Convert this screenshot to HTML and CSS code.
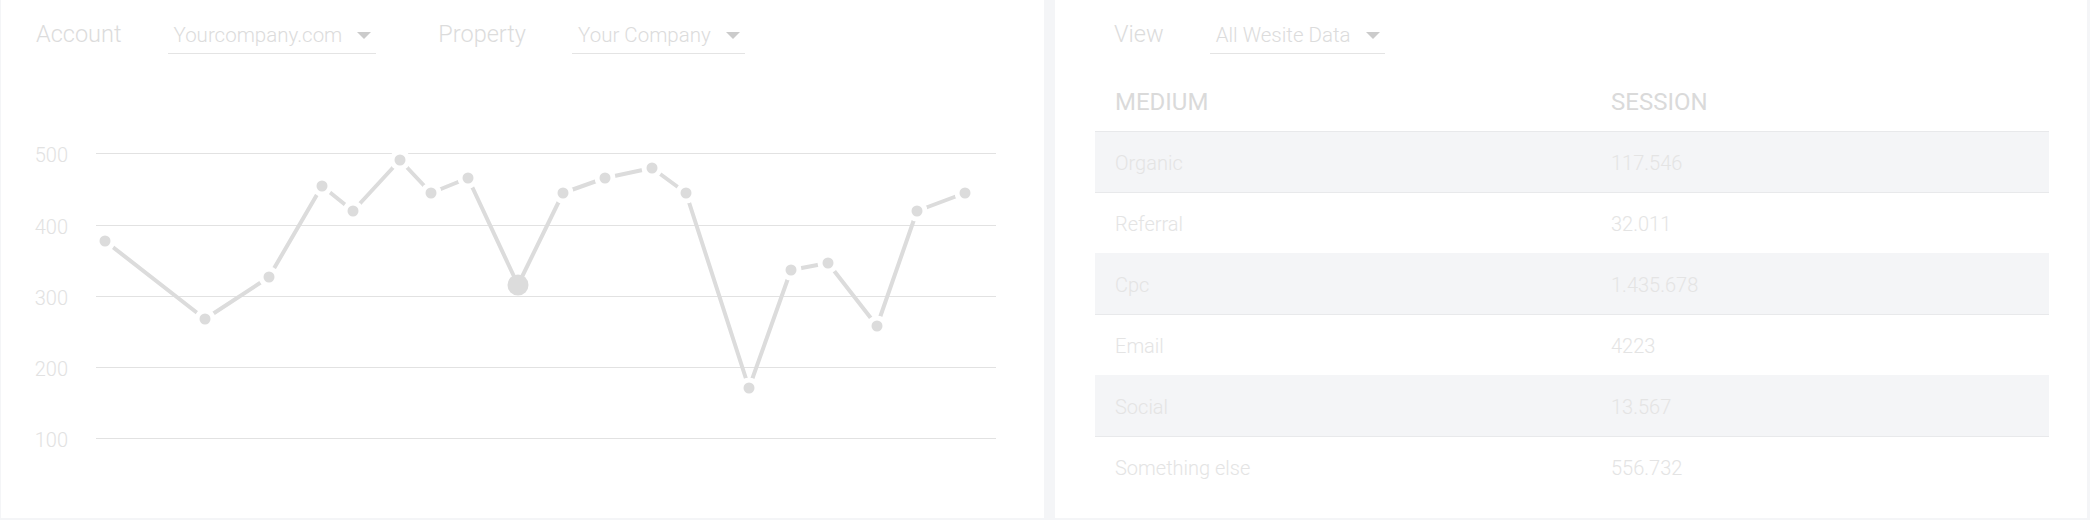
FILE: index.html
```html
<!DOCTYPE html>
<html lang="en">

<head>
    <meta charset="UTF-8">
    <meta name="viewport" content="width=device-width, initial-scale=1.0">
    <title>Traffic Overview</title>
    <link rel="stylesheet" href="styles.css">
</head>

<body>

    <div class="dashboard">

        <!-- Sessions chart -->
        <section class="panel chart-panel">
            <div class="panel-header">
                <span class="field-label">Account</span>
                <div class="select">Yourcompany.com<span class="caret"></span></div>
                <span class="field-label">Property</span>
                <div class="select">Your Company<span class="caret"></span></div>
            </div>

            <svg class="chart" width="1043" height="458" viewBox="0 60 1043 458">
                <g class="grid">
                    <line x1="95" y1="153.5" x2="995" y2="153.5" />
                    <line x1="95" y1="225.5" x2="995" y2="225.5" />
                    <line x1="95" y1="296.5" x2="995" y2="296.5" />
                    <line x1="95" y1="367.5" x2="995" y2="367.5" />
                    <line x1="95" y1="438.5" x2="995" y2="438.5" />
                </g>
                <g class="axis">
                    <text x="67" y="162">500</text>
                    <text x="67" y="234">400</text>
                    <text x="67" y="305">300</text>
                    <text x="67" y="376">200</text>
                    <text x="67" y="447">100</text>
                </g>
                <polyline class="series" points="104,241 204,319 268,277 321,186 352,211 399,160 430,193 467,178 517,285 562,193 604,178 651,168 685,193 748,388 790,270 827,263 876,326 916,211 964,193" />
                <g class="dots">
                    <circle cx="104" cy="241" r="5.5" />
                    <circle cx="204" cy="319" r="5.5" />
                    <circle cx="268" cy="277" r="5.5" />
                    <circle cx="321" cy="186" r="5.5" />
                    <circle cx="352" cy="211" r="5.5" />
                    <circle cx="399" cy="160" r="5.5" />
                    <circle cx="430" cy="193" r="5.5" />
                    <circle cx="467" cy="178" r="5.5" />
                    <circle cx="562" cy="193" r="5.5" />
                    <circle cx="604" cy="178" r="5.5" />
                    <circle cx="651" cy="168" r="5.5" />
                    <circle cx="685" cy="193" r="5.5" />
                    <circle cx="748" cy="388" r="5.5" />
                    <circle cx="790" cy="270" r="5.5" />
                    <circle cx="827" cy="263" r="5.5" />
                    <circle cx="876" cy="326" r="5.5" />
                    <circle cx="916" cy="211" r="5.5" />
                    <circle cx="964" cy="193" r="5.5" />
                </g>
                <circle class="dot-active" cx="517" cy="285" r="10.5" />
            </svg>
        </section>

        <!-- Sessions by medium -->
        <section class="panel table-panel">
            <div class="panel-header panel-header-inset">
                <span class="field-label">View</span>
                <div class="select">All Wesite Data<span class="caret"></span></div>
            </div>

            <table class="data-table">
                <thead>
                    <tr>
                        <th class="col-medium">MEDIUM</th>
                        <th>SESSION</th>
                    </tr>
                </thead>
                <tbody>
                    <tr><td>Organic</td><td>117.546</td></tr>
                    <tr><td>Referral</td><td>32.011</td></tr>
                    <tr><td>Cpc</td><td>1.435.678</td></tr>
                    <tr><td>Email</td><td>4223</td></tr>
                    <tr><td>Social</td><td>13.567</td></tr>
                    <tr><td>Something else</td><td>556.732</td></tr>
                </tbody>
            </table>
        </section>

    </div>

</body>

</html>
```

FILE: styles.css
```css
/* Basic reset */
* {
    box-sizing: border-box;
    margin: 0;
    padding: 0;
}

body {
    background: #f4f5f7;
    font-family: 'Roboto', 'Liberation Sans', sans-serif;
    font-weight: 300;
    color: #dedede;
    overflow: hidden;
}

/* Two panels side by side */
.dashboard {
    display: grid;
    grid-template-columns: 1043px 1032px;
    column-gap: 11px;
    padding: 0 3px 2px 1px;
    height: 520px;
}

.panel {
    background: #fff;
    height: 518px;
}

/* Header with the selectors */
.panel-header {
    display: flex;
    align-items: baseline;
    height: 60px;
    padding: 20px 0 0 35px;
}

.panel-header-inset {
    padding-left: 19px;
}

.field-label {
    font-size: 23.5px;
    line-height: 28px;
    color: #dcdcdc;
    margin-right: 46px;
}

.select {
    display: inline-flex;
    align-items: center;
    gap: 15px;
    font-size: 20.5px;
    line-height: 24px;
    color: #dcdcdc;
    padding: 0 5px 6px 6px;
    border-bottom: 1px solid #e4e4e4;
    margin-right: 62px;
}

.caret {
    width: 0;
    height: 0;
    border-left: 7px solid transparent;
    border-right: 7px solid transparent;
    border-top: 7px solid #cbcbcb;
}

/* Line chart */
.chart {
    display: block;
}

.chart .grid line {
    stroke: #e2e2e2;
    stroke-width: 1;
}

.chart .axis text {
    font-family: 'Roboto', sans-serif;
    font-weight: 300;
    font-size: 20px;
    fill: #e2e2e2;
    text-anchor: end;
}

.chart .series {
    fill: none;
    stroke: #dcdcdc;
    stroke-width: 4;
    stroke-linejoin: round;
}

.chart .dots circle {
    fill: #dcdcdc;
    stroke: #fff;
    stroke-width: 10;
    paint-order: stroke;
}

.chart .dot-active {
    fill: #dcdcdc;
}

/* Table panel */
.table-panel {
    padding: 0 38px 0 40px;
}

.data-table {
    width: 100%;
    margin-top: 13px;
    border-collapse: collapse;
    table-layout: fixed;
}

.data-table th {
    font-size: 24px;
    line-height: 28px;
    font-weight: 400;
    color: #dadada;
    text-align: left;
    padding: 15px 20px;
    border-bottom: 1px solid #e8e9eb;
}

.data-table .col-medium {
    width: 496px;
}

.data-table td {
    font-size: 20px;
    line-height: 24px;
    color: #e4e4e4;
    padding: 19px 20px 17px;
    border-bottom: 1px solid #e8e9eb;
}

.data-table tbody tr:nth-child(odd) {
    background: #f4f5f7;
}

.data-table tbody tr:nth-child(even) td {
    border-bottom-color: #f4f5f7;
}

.data-table tbody tr:last-child td {
    border-bottom: none;
}
```
